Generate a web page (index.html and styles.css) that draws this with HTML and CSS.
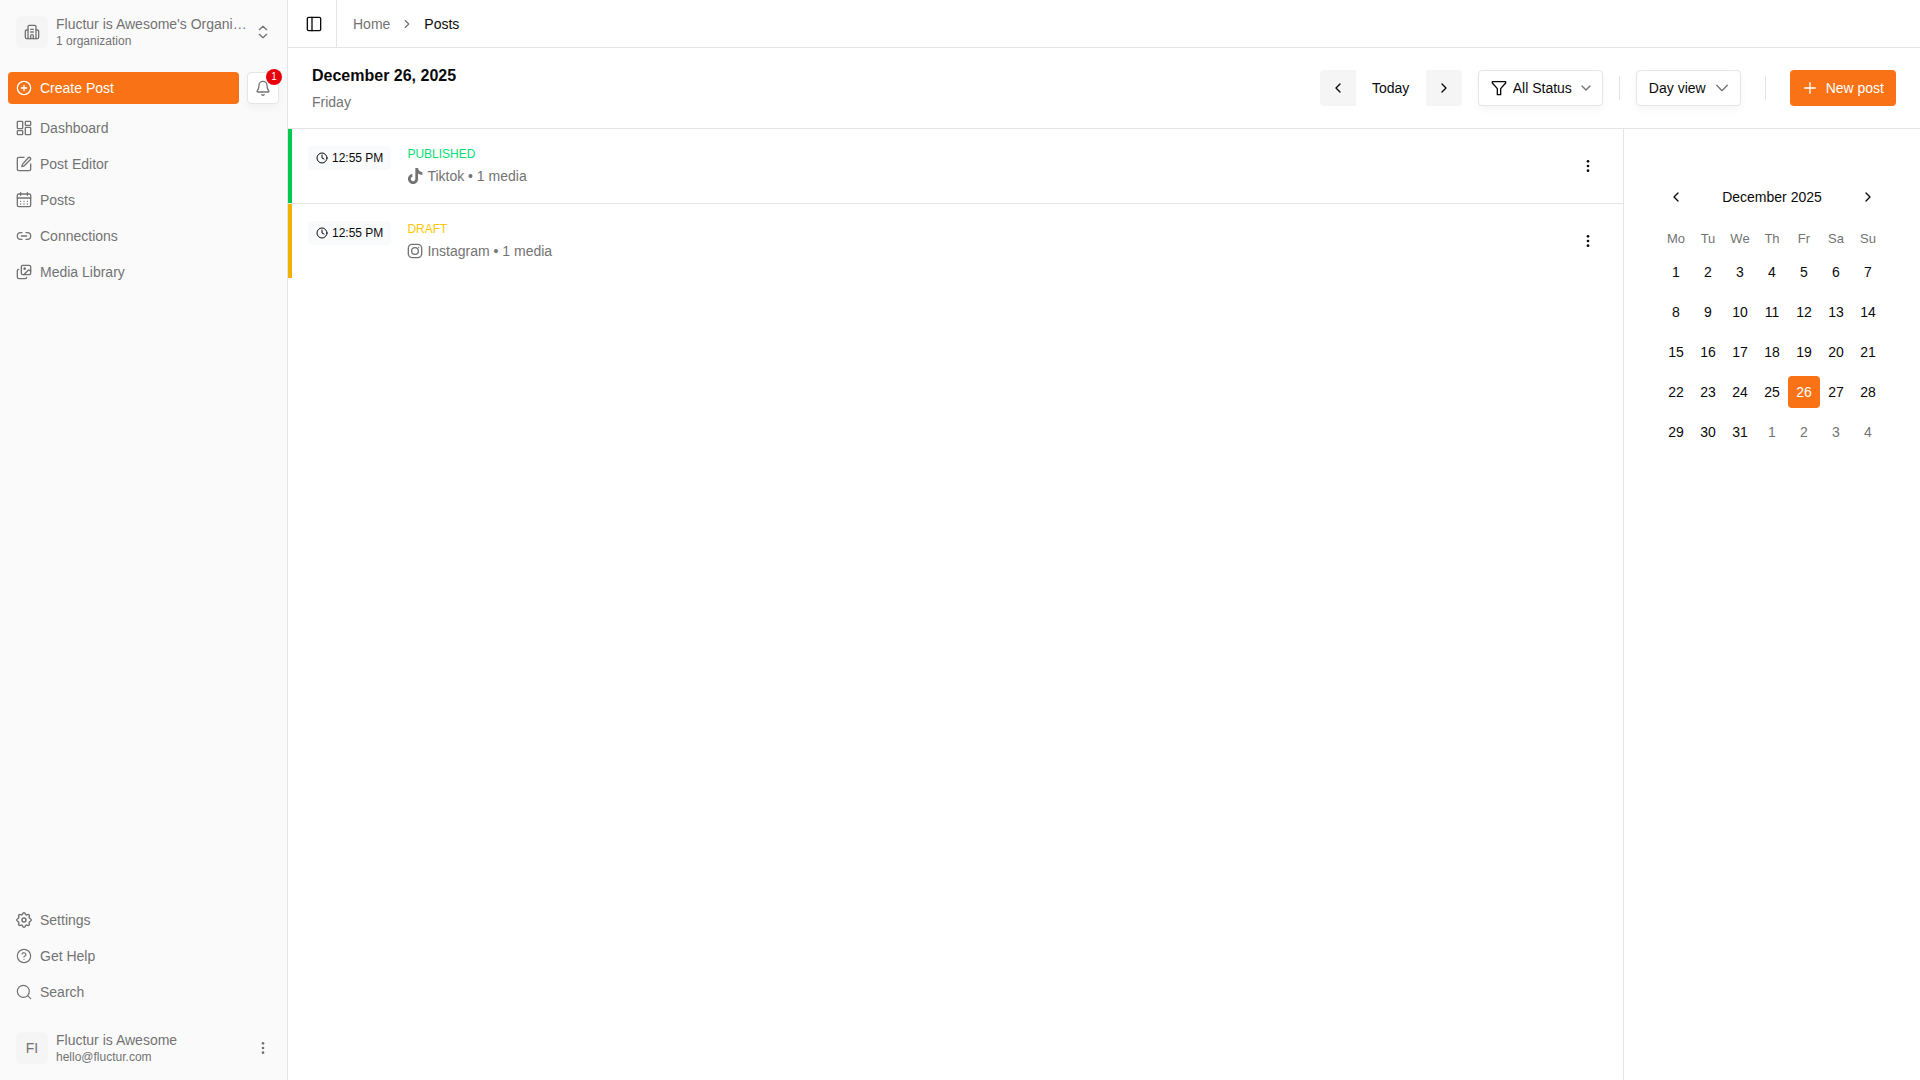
FILE: index.html
```html
<!DOCTYPE html>
<html lang="en">
<head>
  <meta charset="UTF-8">
  <meta name="viewport" content="width=device-width, initial-scale=1.0">
  <title>Posts</title>
  <link rel="stylesheet" href="styles.css">
</head>
<body>

  <!-- Sidebar -->
  <aside class="sidebar">
    <button type="button" class="account">
      <span class="avatar">
        <svg class="icon" viewBox="0 0 24 24"><path d="M10 12h4M10 8h4M14 22v-4a2 2 0 0 0-4 0v4"/><path d="M6 9H4a2 2 0 0 0-2 2v9a2 2 0 0 0 2 2h16a2 2 0 0 0 2-2v-9a2 2 0 0 0-2-2h-2"/><path d="M6 22V4a2 2 0 0 1 2-2h8a2 2 0 0 1 2 2v18"/></svg>
      </span>
      <span class="account-text">
        <span class="account-name">Fluctur is Awesome's Organi…</span>
        <span class="account-sub">1 organization</span>
      </span>
      <svg class="icon" viewBox="0 0 24 24"><path d="m6.500 15.500 5.500 5 5.500-5M6.500 8.500l5.500-5 5.500 5"/></svg>
    </button>

    <div class="create-row">
      <button type="button" class="create-btn">
        <svg class="icon" viewBox="0 0 24 24"><circle cx="12" cy="12" r="10"/><path d="M8 12h8M12 8v8"/></svg>
        Create Post
      </button>
      <button type="button" class="bell-btn" aria-label="Notifications">
        <svg class="icon" viewBox="0 0 24 24"><path d="M10.268 22a2 2 0 0 0 3.464 0"/><path d="M3.262 16.326A1 1 0 0 0 4 18h16a1 1 0 0 0 .74-1.673C19.41 14.956 18 13.499 18 8A6 6 0 0 0 6 8c0 5.499-1.411 6.956-2.738 8.326"/></svg>
        <span class="badge">1</span>
      </button>
    </div>

    <nav class="menu">
      <a href="#"><svg class="icon" viewBox="0 0 24 24"><rect x="2" y="2" width="8" height="11" rx="1"/><rect x="14" y="2" width="8" height="6" rx="1"/><rect x="14" y="11" width="8" height="11" rx="1"/><rect x="2" y="16" width="8" height="6" rx="1"/></svg>Dashboard</a>
      <a href="#"><svg class="icon" viewBox="0 0 24 24"><path d="M12 2H4a2 2 0 0 0-2 2v16a2 2 0 0 0 2 2h16a2 2 0 0 0 2-2v-8"/><path d="M18.4 2.6a2.1 2.1 0 0 1 3 3l-9 9a2 2 0 0 1-.9.5l-2.8.9.8-2.9a2 2 0 0 1 .5-.9z"/></svg>Post Editor</a>
      <a href="#"><svg class="icon" viewBox="0 0 24 24"><path d="M7 1v4M17 1v4M2 9h20"/><rect x="2" y="3" width="20" height="19" rx="2"/><path d="M7 14h.01M12 14h.01M17 14h.01M7 18h.01M12 18h.01M17 18h.01"/></svg>Posts</a>
      <a href="#"><svg class="icon" viewBox="0 0 24 24"><path d="M9 17H7A5 5 0 0 1 7 7h2M15 7h2a5 5 0 0 1 0 10h-2M8 12h8"/></svg>Connections</a>
      <a href="#"><svg class="icon" viewBox="0 0 24 24"><rect x="8" y="2" width="14" height="14" rx="2"/><path d="M4 8a2 2 0 0 0-2 2v10a2 2 0 0 0 2 2h10a2 2 0 0 0 2-2"/><circle cx="13" cy="7" r="1"/><path d="m22 11-1.3-1.3a2 2 0 0 0-2.8 0L11.6 16"/></svg>Media Library</a>
    </nav>

    <nav class="menu menu-bottom">
      <a href="#"><svg class="icon" viewBox="2 2 20 20"><path d="M10.325 4.317c.426-1.756 2.924-1.756 3.35 0a1.724 1.724 0 0 0 2.573 1.066c1.543-.94 3.31.826 2.37 2.37a1.724 1.724 0 0 0 1.065 2.572c1.756.426 1.756 2.924 0 3.35a1.724 1.724 0 0 0-1.066 2.573c.94 1.543-.826 3.31-2.37 2.37a1.724 1.724 0 0 0-2.572 1.065c-.426 1.756-2.924 1.756-3.35 0a1.724 1.724 0 0 0-2.573-1.066c-1.543.94-3.31-.826-2.37-2.37a1.724 1.724 0 0 0-1.065-2.572c-1.756-.426-1.756-2.924 0-3.35a1.724 1.724 0 0 0 1.066-2.573c-.94-1.543.826-3.31 2.37-2.37 1 .608 2.296.07 2.572-1.065z"/><circle cx="12" cy="12" r="2.5"/></svg>Settings</a>
      <a href="#"><svg class="icon" viewBox="0 0 24 24"><circle cx="12" cy="12" r="10"/><path d="M9.1 9a3 3 0 0 1 5.8 1c0 2-3 2-3 3.500M12 17h.01"/></svg>Get Help</a>
      <a href="#"><svg class="icon" viewBox="0 0 24 24"><circle cx="11" cy="11" r="9"/><path d="m22 22-4.5-4.5"/></svg>Search</a>
    </nav>

    <button type="button" class="account">
      <span class="avatar">FI</span>
      <span class="account-text">
        <span class="account-name">Fluctur is Awesome</span>
        <span class="account-sub">hello@fluctur.com</span>
      </span>
      <svg class="icon dots" viewBox="0 0 24 24"><circle cx="12" cy="5" r="2"/><circle cx="12" cy="12" r="2"/><circle cx="12" cy="19" r="2"/></svg>
    </button>
  </aside>

  <!-- Page -->
  <main class="page">
    <div class="topbar">
      <button type="button" class="toggle-btn" aria-label="Toggle sidebar">
        <svg class="icon" viewBox="0 0 24 24"><rect x="2" y="2" width="20" height="20" rx="2"/><path d="M9 2v20"/></svg>
      </button>
      <nav class="breadcrumb">
        <a href="#">Home</a>
        <svg class="icon icon-sm" viewBox="0 0 24 24"><path d="m9 18 6-6-6-6"/></svg>
        <span>Posts</span>
      </nav>
    </div>

    <header class="header">
      <div class="heading">
        <h1>December 26, 2025</h1>
        <p>Friday</p>
      </div>
      <div class="controls">
        <div class="day-nav">
          <button type="button" class="step-btn" aria-label="Previous day"><svg class="icon" viewBox="0 0 24 24"><path d="m15 18-6-6 6-6"/></svg></button>
          <button type="button" class="today-btn">Today</button>
          <button type="button" class="step-btn" aria-label="Next day"><svg class="icon" viewBox="0 0 24 24"><path d="m9 18 6-6-6-6"/></svg></button>
        </div>
        <div class="select select-status">
          <svg class="icon funnel" viewBox="0 0 24 24"><path d="M2 2.5h20v2L14.5 13v9h-5v-9L2 4.500z"/></svg>
          <select aria-label="Status">
            <option>All Status</option>
            <option>Draft</option>
            <option>Published</option>
          </select>
          <svg class="icon caret" viewBox="0 0 24 24"><path d="m6 9 6 6 6-6"/></svg>
        </div>
        <span class="divider"></span>
        <div class="select select-view">
          <select aria-label="View">
            <option>Day view</option>
            <option>Week view</option>
            <option>Month view</option>
          </select>
          <svg class="icon caret" viewBox="0 0 24 24"><path d="m4 8 8 8 8-8"/></svg>
        </div>
        <span class="divider divider-wide"></span>
        <button type="button" class="new-btn">
          <svg class="icon" viewBox="0 0 24 24"><path d="M4 12h16M12 4v16"/></svg>
          New post
        </button>
      </div>
    </header>

    <div class="content">
      <section class="posts">
        <article class="post published">
          <time class="time"><svg class="icon icon-xs" viewBox="0 0 24 24"><circle cx="12" cy="12" r="10"/><path d="M12 6v6l4 2"/></svg>12:55 PM</time>
          <div class="post-info">
            <div class="status">PUBLISHED</div>
            <div class="channel">
              <svg class="icon brand" viewBox="0 0 24 24"><path d="M12.5 0h4.1c.1 1.6.7 3.2 1.8 4.3A7.5 7.5 0 0 0 23 6.400v4.100a11.500 11.500 0 0 1-6.400-2.100v8.100a7.600 7.600 0 1 1-8.600-7.500v4.300a3.400 3.400 0 1 0 4.500 3.200z"/></svg>
              Tiktok • 1 media
            </div>
          </div>
          <button type="button" class="more-btn" aria-label="More"><svg class="icon dots" viewBox="0 0 24 24"><circle cx="12" cy="5" r="2"/><circle cx="12" cy="12" r="2"/><circle cx="12" cy="19" r="2"/></svg></button>
        </article>
        <article class="post draft">
          <time class="time"><svg class="icon icon-xs" viewBox="0 0 24 24"><circle cx="12" cy="12" r="10"/><path d="M12 6v6l4 2"/></svg>12:55 PM</time>
          <div class="post-info">
            <div class="status">DRAFT</div>
            <div class="channel">
              <svg class="icon" viewBox="0 0 24 24"><rect x="2" y="2" width="20" height="20" rx="6"/><circle cx="12" cy="12" r="5"/><path d="M17.5 6.500h.01"/></svg>
              Instagram • 1 media
            </div>
          </div>
          <button type="button" class="more-btn" aria-label="More"><svg class="icon dots" viewBox="0 0 24 24"><circle cx="12" cy="5" r="2"/><circle cx="12" cy="12" r="2"/><circle cx="12" cy="19" r="2"/></svg></button>
        </article>
      </section>

      <!-- Month picker -->
      <aside class="calendar">
        <div class="month">
          <button type="button" aria-label="Previous month"><svg class="icon" viewBox="0 0 24 24"><path d="m15 18-6-6 6-6"/></svg></button>
          <span>December 2025</span>
          <button type="button" aria-label="Next month"><svg class="icon" viewBox="0 0 24 24"><path d="m9 18 6-6-6-6"/></svg></button>
        </div>
        <table class="days">
          <thead>
            <tr><th>Mo</th><th>Tu</th><th>We</th><th>Th</th><th>Fr</th><th>Sa</th><th>Su</th></tr>
          </thead>
          <tbody>
            <tr><td><button>1</button></td><td><button>2</button></td><td><button>3</button></td><td><button>4</button></td><td><button>5</button></td><td><button>6</button></td><td><button>7</button></td></tr>
            <tr><td><button>8</button></td><td><button>9</button></td><td><button>10</button></td><td><button>11</button></td><td><button>12</button></td><td><button>13</button></td><td><button>14</button></td></tr>
            <tr><td><button>15</button></td><td><button>16</button></td><td><button>17</button></td><td><button>18</button></td><td><button>19</button></td><td><button>20</button></td><td><button>21</button></td></tr>
            <tr><td><button>22</button></td><td><button>23</button></td><td><button>24</button></td><td><button>25</button></td><td><button class="selected">26</button></td><td><button>27</button></td><td><button>28</button></td></tr>
            <tr><td><button>29</button></td><td><button>30</button></td><td><button>31</button></td><td><button class="outside">1</button></td><td><button class="outside">2</button></td><td><button class="outside">3</button></td><td><button class="outside">4</button></td></tr>
          </tbody>
        </table>
      </aside>
    </div>
  </main>

</body>
</html>
```

FILE: styles.css
```css
* {
  margin: 0;
  padding: 0;
  box-sizing: border-box;
}

body {
  display: flex;
  min-height: 100vh;
  font-family: "Liberation Sans", Arial, sans-serif;
  font-size: 14px;
  line-height: 20px;
  color: #0a0a0a;
  background: #fff;
}

button,
select {
  font: inherit;
  color: inherit;
  border: none;
  background: none;
  cursor: pointer;
}

a {
  color: inherit;
  text-decoration: none;
}

.icon {
  width: 16px;
  height: 16px;
  flex-shrink: 0;
  fill: none;
  stroke: currentColor;
  stroke-width: 2;
  stroke-linecap: round;
  stroke-linejoin: round;
}

.icon-sm {
  width: 14px;
  height: 14px;
}

.icon-xs {
  width: 12px;
  height: 12px;
}

.dots,
.brand {
  fill: currentColor;
  stroke: none;
}

/* Sidebar */
.sidebar {
  display: flex;
  flex-direction: column;
  width: 288px;
  flex-shrink: 0;
  padding: 8px;
  background: #fafafa;
  border-right: 1px solid #e5e5e5;
  color: #737373;
}

.account {
  display: flex;
  align-items: center;
  gap: 8px;
  height: 48px;
  padding: 8px;
  text-align: left;
}

.avatar {
  display: flex;
  align-items: center;
  justify-content: center;
  width: 32px;
  height: 32px;
  flex-shrink: 0;
  border-radius: 6px;
  background: #f5f5f5;
}

.account-text {
  flex: 1;
  min-width: 0;
}

.account-name,
.account-sub {
  display: block;
  overflow: hidden;
  text-overflow: ellipsis;
  white-space: nowrap;
}

.account-name {
  line-height: 18px;
}

.account-sub {
  font-size: 12px;
  line-height: 16px;
}

.create-row {
  display: flex;
  gap: 8px;
  margin: 16px 0 8px;
}

.create-btn {
  display: flex;
  align-items: center;
  gap: 8px;
  flex: 1;
  height: 32px;
  padding: 8px;
  border-radius: 4px;
  background: #f97316;
  color: #fff;
}

.bell-btn {
  position: relative;
  display: flex;
  align-items: center;
  justify-content: center;
  width: 32px;
  height: 32px;
  border: 1px solid #e5e5e5;
  border-radius: 4px;
  background: #fff;
  box-shadow: 0 4px 8px rgba(0, 0, 0, 0.04);
}

.badge {
  position: absolute;
  top: -4px;
  right: -4px;
  width: 16px;
  height: 16px;
  border-radius: 50%;
  background: #e7000b;
  color: #fff;
  font-size: 10px;
  line-height: 16px;
  text-align: center;
}

.menu {
  display: flex;
  flex-direction: column;
  gap: 4px;
}

.menu a {
  display: flex;
  align-items: center;
  gap: 8px;
  height: 32px;
  padding: 8px;
}

.menu-bottom {
  margin-top: auto;
  margin-bottom: 16px;
}

.menu-bottom .icon {
  stroke-width: 1.8;
}

/* Page */
.page {
  display: flex;
  flex-direction: column;
  flex: 1;
  min-width: 0;
}

.topbar {
  display: flex;
  height: 48px;
  border-bottom: 1px solid #e5e5e5;
}

.toggle-btn {
  display: flex;
  align-items: center;
  padding: 0 14px 0 18px;
  border-right: 1px solid #e5e5e5;
}

.breadcrumb {
  display: flex;
  align-items: center;
  gap: 10px;
  padding-left: 16px;
}

.breadcrumb a,
.breadcrumb svg {
  color: #737373;
}

.header {
  display: flex;
  align-items: center;
  justify-content: space-between;
  padding: 16px 24px;
  border-bottom: 1px solid #e5e5e5;
}

.heading h1 {
  font-size: 16px;
  line-height: 24px;
  margin-bottom: 4px;
}

.heading p {
  color: #737373;
}

.controls {
  display: flex;
  align-items: center;
  gap: 16px;
}

.day-nav {
  display: flex;
  border-radius: 4px;
  overflow: hidden;
}

.step-btn {
  display: flex;
  align-items: center;
  justify-content: center;
  width: 36px;
  height: 36px;
  background: #f5f5f5;
}

.today-btn {
  width: 70px;
}

.select {
  position: relative;
}

.select select {
  display: block;
  height: 36px;
  appearance: none;
  field-sizing: content;
  border: 1px solid #e5e5e5;
  border-radius: 4px;
  background: #fff;
  box-shadow: 0 4px 8px rgba(0, 0, 0, 0.04);
}

.select-status select {
  padding: 0 30px 0 34px;
}

.select-view select {
  padding: 0 34px 0 12px;
}

.select .icon {
  position: absolute;
  top: 10px;
  pointer-events: none;
}

.funnel {
  left: 13px;
}

.caret {
  right: 9px;
  color: #737373;
}

.select-view .caret {
  right: 11px;
}

.divider {
  width: 1px;
  height: 24px;
  background: #e5e5e5;
}

.divider-wide {
  margin: 0 8px;
}

.new-btn {
  display: flex;
  align-items: center;
  gap: 8px;
  height: 36px;
  padding: 0 12px;
  border-radius: 4px;
  background: #f97316;
  color: #fff;
}

.content {
  display: flex;
  flex: 1;
}

.posts {
  flex: 1;
}

.post {
  display: flex;
  align-items: flex-start;
  padding: 17px;
  padding-left: 16px;
  border-left: 4px solid;
}

.post + .post {
  margin-top: 1px;
  box-shadow: 0 -1px #e5e5e5;
}

.published {
  border-color: #00c950;
}

.draft {
  border-color: #f0b100;
}

.time {
  display: flex;
  align-items: center;
  gap: 4px;
  height: 24px;
  padding: 0 8px;
  border-radius: 4px;
  background: #f9fafb;
  font-size: 12px;
}

.post-info {
  flex: 1;
  margin-left: 16px;
}

.status {
  font-size: 12px;
  line-height: 16px;
  margin-bottom: 4px;
}

.published .status {
  color: #05df72;
}

.draft .status {
  color: #fdc700;
}

.channel {
  display: flex;
  align-items: center;
  gap: 4px;
  color: #737373;
}

.more-btn {
  display: flex;
  align-items: center;
  justify-content: center;
  align-self: center;
  width: 36px;
  height: 36px;
}

/* Month picker */
.calendar {
  width: 297px;
  padding: 52px 36px;
  border-left: 1px solid #e5e5e5;
}

.month {
  display: flex;
  align-items: center;
  justify-content: space-between;
}

.month button,
.days button {
  width: 32px;
  height: 32px;
  border-radius: 4px;
}

.month button {
  display: flex;
  align-items: center;
  justify-content: center;
}

.days {
  margin-top: 16px;
  border-collapse: collapse;
}

.days th {
  width: 32px;
  font-size: 13px;
  line-height: 19px;
  font-weight: normal;
  color: #737373;
}

.days td {
  padding-top: 8px;
}

.days button {
  display: block;
}

.days .selected {
  background: #f97316;
  color: #fff;
}

.days .outside {
  color: #737373;
}
```
